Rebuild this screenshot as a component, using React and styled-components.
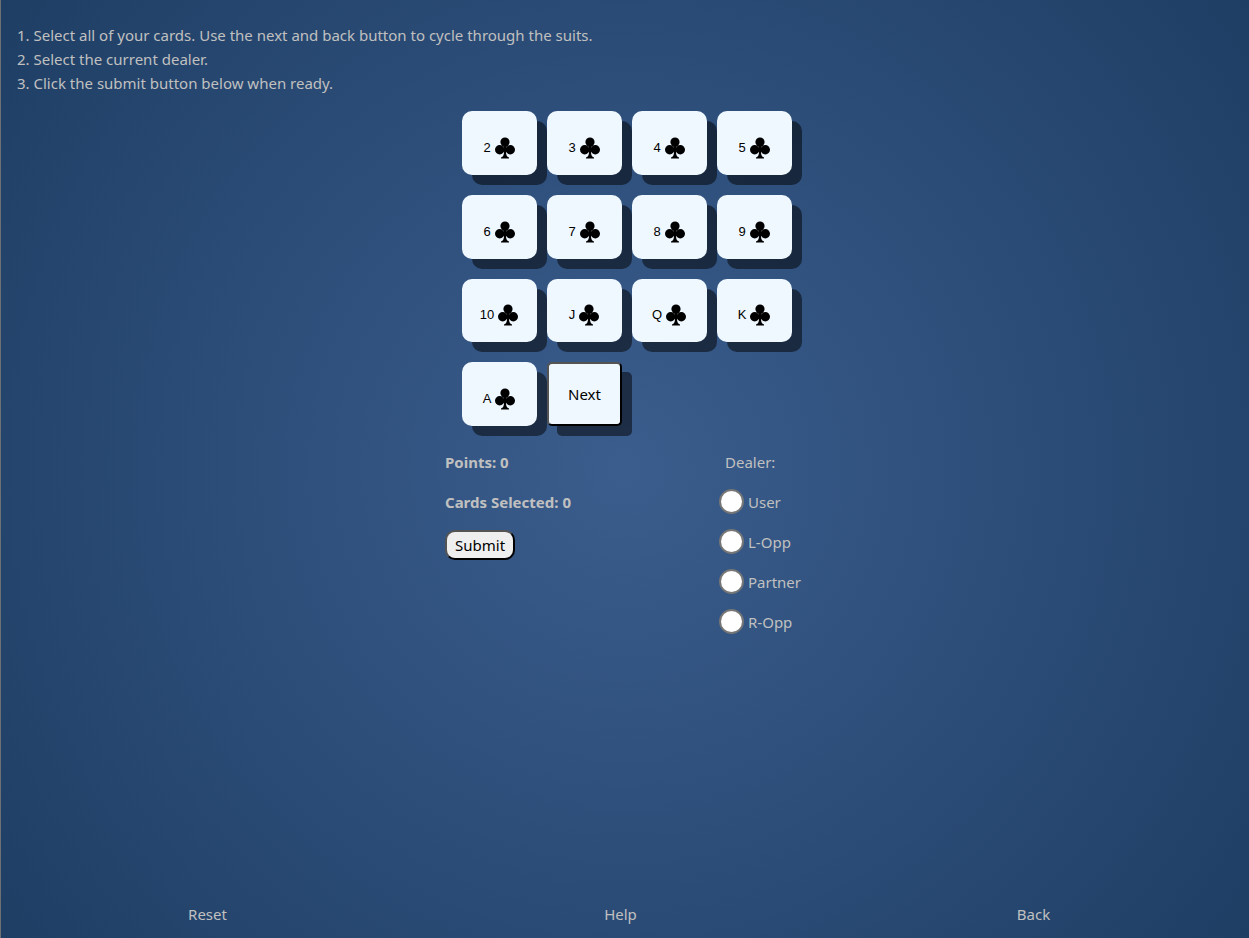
import React from "react";
import styled, { createGlobalStyle } from "styled-components";

const Global = createGlobalStyle`
  *, *::before, *::after { box-sizing: border-box; }
  body {
    margin: 0;
    color: #c0c0c0;
    font-family: "Segoe UI", "Noto Sans", "Open Sans", sans-serif;
    font-size: 15px;
    line-height: 24px;
  }
`;

const Page = styled.div`
  display: flex;
  flex-direction: column;
  min-height: 100vh;
  border-left: 1px solid #6e7073;
  background: radial-gradient(circle at center, #3b5d8d 0%, #1e3e64 100%);
`;

const Instructions = styled.section`
  padding: 23px 16px 16px;
`;

const Line = styled.p`
  margin: 0;
`;

const Main = styled.main`
  flex: 1;
  width: 100%;
  max-width: 360px;
  margin: 0 auto;
`;

const CardGrid = styled.div`
  display: grid;
  grid-template-columns: repeat(4, 75px);
  grid-template-rows: repeat(4, 1fr);
  gap: 20px 10px;
  height: 315px;
  margin: 0 0 24px 17px;
`;

const Card = styled.button`
  display: flex;
  align-items: center;
  justify-content: center;
  gap: 4px;
  padding: 10px 0 0;
  border: 0;
  border-radius: 10px;
  background: #f0f8ff;
  box-shadow: 10px 10px rgba(0, 0, 0, 0.5);
  color: #000;
  font: 13px/16px "Liberation Sans", Arial, sans-serif;
  cursor: pointer;
`;

const NextButton = styled.button`
  padding: 0;
  border: 2px outset #000;
  border-radius: 5px;
  background: #f0f8ff;
  box-shadow: 10px 10px rgba(0, 0, 0, 0.5);
  color: #000;
  font: inherit;
  cursor: pointer;
`;

const Suit = styled.svg`
  flex: none;
  width: 21px;
  height: 22px;
`;

const Details = styled.div`
  display: grid;
  grid-template-columns: 1fr 86px;
`;

const Column = styled.div`
  display: flex;
  flex-direction: column;
  align-items: flex-start;
  gap: 16px;
`;

const Stat = styled.p`
  margin: 0;
  font-weight: 700;
`;

const SubmitButton = styled.button`
  height: 30px;
  padding: 0 8px;
  border: 2px outset #000;
  border-radius: 10px;
  background: #efefef;
  color: #000;
  font: inherit;
  cursor: pointer;
`;

const Dealers = styled.fieldset`
  display: flex;
  flex-direction: column;
  gap: 16px;
  min-width: 0;
  margin: 0;
  padding: 0;
  border: 0;
`;

const Legend = styled.legend`
  margin-bottom: 16px;
  padding: 0 6px;
`;

const Option = styled.label`
  display: flex;
  align-items: center;
  gap: 4px;
  height: 24px;
  white-space: nowrap;
`;

const Radio = styled.input`
  appearance: none;
  flex: none;
  width: 25px;
  height: 25px;
  margin: 0 0 2px;
  border: 2px solid #767676;
  border-radius: 50%;
  background: #fff;
  &:checked { box-shadow: inset 0 0 0 4px #fff; background: #0075ff; }
`;

const Footer = styled.footer`
  display: grid;
  grid-template-columns: repeat(3, 1fr);
  padding: 0 9px 12px 0;
  text-align: center;
`;

const FooterLink = styled.a`
  color: inherit;
  text-decoration: none;
`;

const ranks = ["2", "3", "4", "5", "6", "7", "8", "9", "10", "J", "Q", "K", "A"];
const dealers = ["User", "L-Opp", "Partner", "R-Opp"];

const Club = () => (
  <Suit viewBox="0 0 21 22" aria-hidden="true">
    <circle cx="10" cy="5" r="4.6" />
    <circle cx="4.700" cy="12.700" r="4.700" />
    <circle cx="15.300" cy="12.700" r="4.700" />
    <path d="M7.500 8.200h5c-1 1.200-1.300 2.200-.9 3.200l1.400.6v2.200l-2 .3c0 3.200.7 5.200 3 6v.9H6v-.9c2.300-.8 3-2.800 3-6l-2-.3V12l1.400-.6c.4-1 .1-2-.9-3.200z" />
  </Suit>
);

export default function App() {
  return (
    <>
      <Global />
      <Page>
        <Instructions>
          <Line>1. Select all of your cards. Use the next and back button to cycle through the suits.</Line>
          <Line>2. Select the current dealer.</Line>
          <Line>3. Click the submit button below when ready.</Line>
        </Instructions>
        <Main>
          <CardGrid>
            {ranks.map((rank) => (
              <Card key={rank} type="button" aria-label={`${rank} of clubs`}>
                <span>{rank}</span>
                <Club />
              </Card>
            ))}
            <NextButton type="button">Next</NextButton>
          </CardGrid>
          <Details>
            <Column>
              <Stat>Points: 0</Stat>
              <Stat>Cards Selected: 0</Stat>
              <SubmitButton type="button">Submit</SubmitButton>
            </Column>
            <Dealers>
              <Legend>Dealer:</Legend>
              {dealers.map((name) => (
                <Option key={name}>
                  <Radio type="radio" name="dealer" value={name} />
                  {name}
                </Option>
              ))}
            </Dealers>
          </Details>
        </Main>
        <Footer>
          <FooterLink href="#reset">Reset</FooterLink>
          <FooterLink href="#help">Help</FooterLink>
          <FooterLink href="#back">Back</FooterLink>
        </Footer>
      </Page>
    </>
  );
}
